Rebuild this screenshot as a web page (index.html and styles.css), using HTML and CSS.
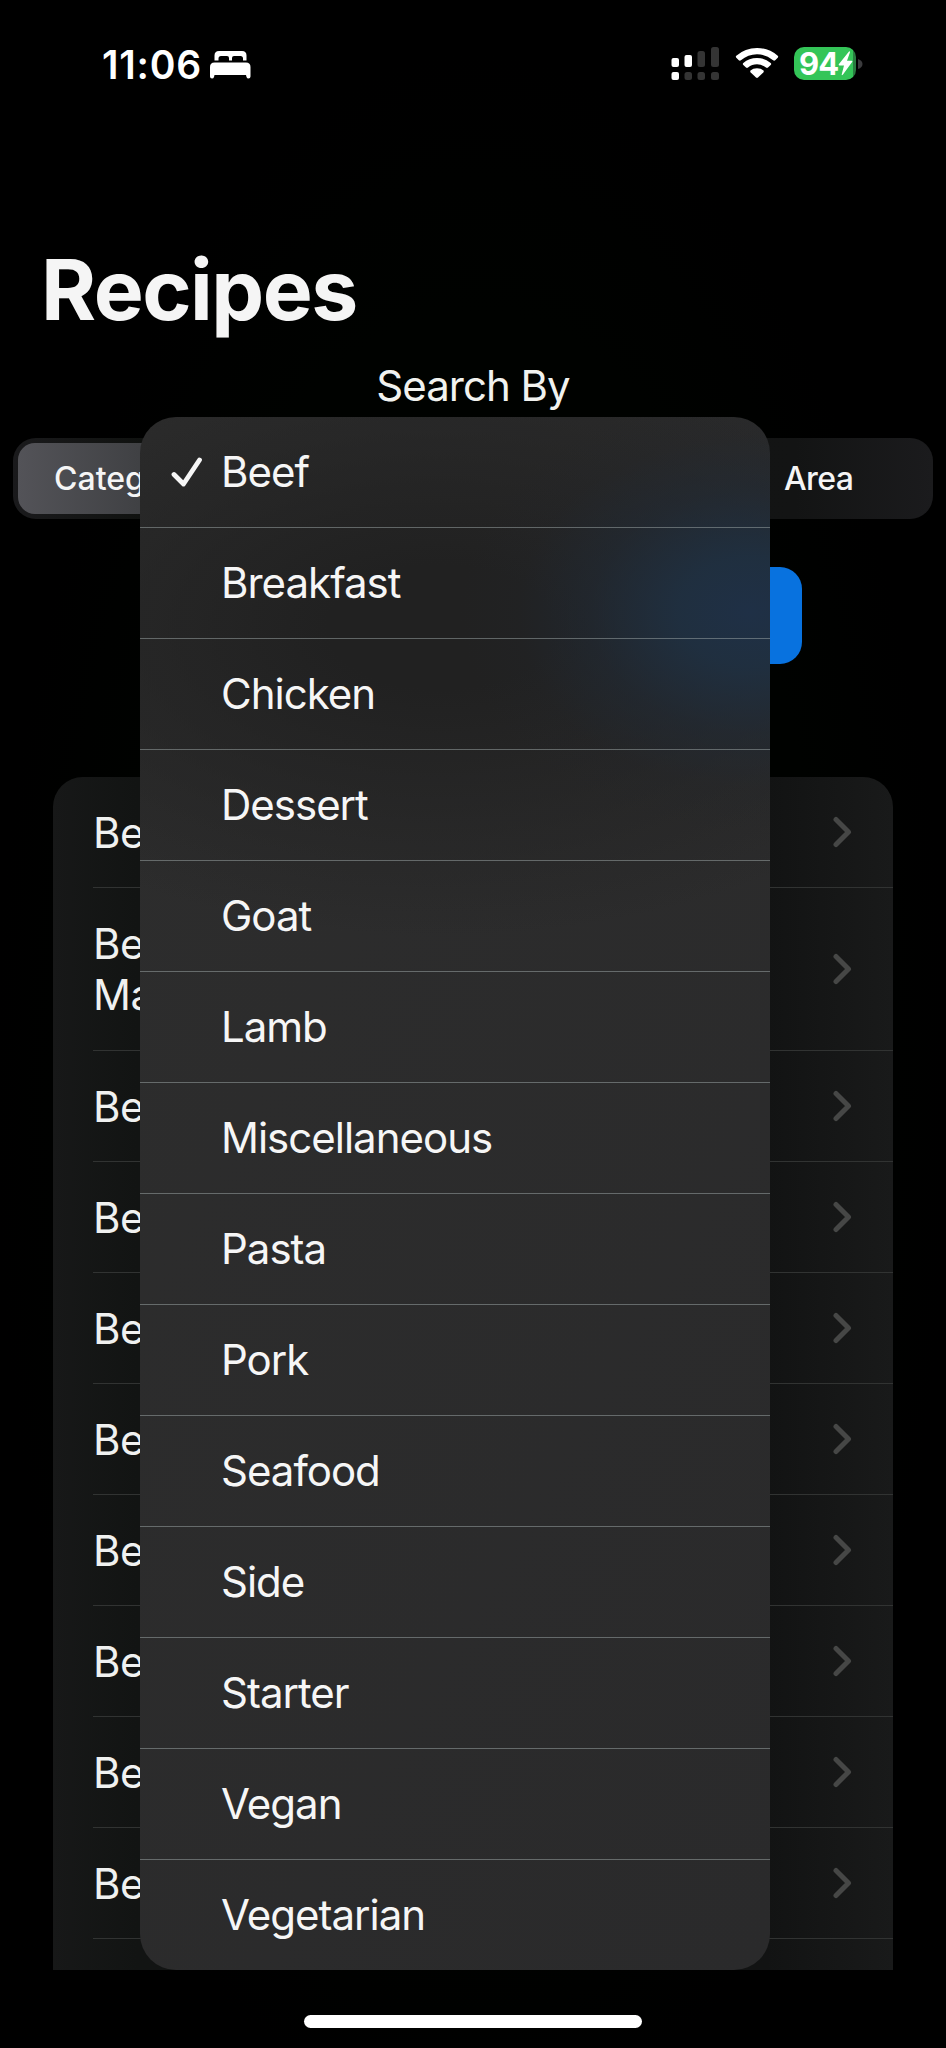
FILE: index.html
```
<!DOCTYPE html>
<html lang="en">
<head>
<meta charset="utf-8">
<title>Recipes</title>
<link rel="stylesheet" href="styles.css">
</head>
<body>
<svg class="defs" width="0" height="0"><symbol id="chev" viewBox="0 0 20 32"><path d="M3 3.500 L15.500 16 L3 28.500" fill="none" stroke="currentColor" stroke-width="5" stroke-linecap="round" stroke-linejoin="round"/></symbol></svg>
<div class="phone">
  <header class="status">
    <span class="time">11:06</span>
    <svg class="bed" width="42" height="30" viewBox="0 0 42 30"><path fill="#fff" d="M4.500 10.500V5.500Q4.500 1 9 1H32Q36.500 1 36.500 5.500V10.500H33V8.500Q33 6 30.500 6H24Q22 6 22 8V10.500H19V8Q19 6 17 6H11Q8.500 6 8.500 8.500V10.500Z"/><path fill="#fff" d="M0 17Q0 12.500 4.500 12.500H36Q40.500 12.500 40.500 17V26.500Q40.500 28.500 38.500 28.500Q37 28.500 36.500 27L36 25H4.500L4 27Q3.500 28.500 2 28.500Q0 28.500 0 26.500Z"/></svg>
    <svg class="signal" width="50" height="36" viewBox="0 0 50 36"><g fill="#fff"><rect x="0.500" y="11" width="7.500" height="9" rx="2"/><rect x="13.500" y="8" width="7.500" height="12" rx="2"/><rect x="0.500" y="25" width="7.500" height="8" rx="2"/></g><g fill="#343434"><rect x="26.500" y="4" width="7.500" height="16" rx="2.500"/><rect x="40" y="0" width="8" height="20" rx="2.500"/><rect x="13.500" y="25" width="7.500" height="8" rx="2.500"/><rect x="26.500" y="25" width="7.500" height="8" rx="2.500"/><rect x="40" y="25" width="8" height="8" rx="2.500"/></g></svg>
    <svg class="wifi" width="44" height="32" viewBox="0 0 44 32"><g fill="#fff"><path d="M1.300 8.800Q0.300 9.800 1.300 10.800L3.800 13.300Q4.800 14.200 5.900 13.300Q13 7.300 22 7.300T38.100 13.300Q39.200 14.200 40.200 13.300L42.700 10.800Q43.700 9.800 42.700 8.800Q34 1 22 1T1.300 8.800Z"/><path d="M8.300 16Q7.300 17 8.300 18L11 20.600Q12 21.400 13 20.600Q17 17.300 22 17.300T31 20.600Q32 21.400 33 20.600L35.700 18Q36.700 17 35.700 16Q30 11 22 11T8.300 16Z"/><path d="M15.500 23.500Q14.800 24.500 15.700 25.400L21 30.600Q22 31.500 23 30.600L28.300 25.400Q29.200 24.500 28.500 23.500Q26 21.200 22 21.200T15.500 23.500Z"/></g></svg>
    <div class="battery"><span class="pct">94</span><svg class="bolt" width="15" height="25" viewBox="0 0 15 25"><path fill="#fff" d="M11 0.500L0.800 13.200Q0.200 14.300 1.500 14.400H6L3.700 23.500Q3.700 24.800 4.800 23.800L14.300 10.800Q14.800 9.800 13.600 9.700H9L12 1.200Q12 0 11 0.500Z"/></svg></div>
    <svg class="nub" width="5" height="12" viewBox="0 0 5 12"><path fill="#3b3b3d" d="M0 1Q4.500 2.500 4.500 6T0 11Z"/></svg>
  </header>
  <h1 class="title">Recipes</h1>
  <p class="search">Search By</p>
  <div class="segments"><div class="segment selected">Categ</div><div class="segment area">Area</div></div>
  <div class="picker"></div>
  <ul class="list">
    <li><span>Be</span><svg><use href="#chev"/></svg></li>
    <li class="tall"><span>Be<br>Ma</span><svg><use href="#chev"/></svg></li>
    <li><span>Be</span><svg><use href="#chev"/></svg></li>
    <li><span>Be</span><svg><use href="#chev"/></svg></li>
    <li><span>Be</span><svg><use href="#chev"/></svg></li>
    <li><span>Be</span><svg><use href="#chev"/></svg></li>
    <li><span>Be</span><svg><use href="#chev"/></svg></li>
    <li><span>Be</span><svg><use href="#chev"/></svg></li>
    <li><span>Be</span><svg><use href="#chev"/></svg></li>
    <li><span>Be</span><svg><use href="#chev"/></svg></li>
  </ul>
  <div class="home"></div>
  <ul class="menu">
    <li><svg class="check" width="32" height="32" viewBox="0 0 32 32"><path d="M3 17.500L12.500 27L28.500 3" fill="none" stroke="#f6f6f6" stroke-width="4.800" stroke-linecap="round" stroke-linejoin="round"/></svg><span>Beef</span></li>
    <li><span>Breakfast</span></li>
    <li><span>Chicken</span></li>
    <li><span>Dessert</span></li>
    <li><span>Goat</span></li>
    <li><span>Lamb</span></li>
    <li><span>Miscellaneous</span></li>
    <li><span>Pasta</span></li>
    <li><span>Pork</span></li>
    <li><span>Seafood</span></li>
    <li><span>Side</span></li>
    <li><span>Starter</span></li>
    <li><span>Vegan</span></li>
    <li><span>Vegetarian</span></li>
  </ul>
</div>
</body>
</html>
```
FILE: styles.css
```
* { box-sizing: border-box; }
body { margin: 0; background: #000; font-family: Inter, "Liberation Sans", sans-serif; color: #f5f5f5; }
ul { list-style: none; margin: 0; padding: 0; }
.defs { display: block; height: 0; }
.phone { position: relative; width: 946px; height: 2048px; overflow: hidden; display: flex; flex-direction: column; background: radial-gradient(ellipse 480px 1050px at 473px 1100px, #000200 75%, #000 100%); }
.status { height: 130px; flex: none; display: flex; align-items: flex-start; padding: 47px 0 0 102px; color: #fff; }
.time { width: 98px; font-size: 39px; line-height: 36px; font-weight: 600; letter-spacing: 0.800px; white-space: nowrap; }
.bed { margin: 3px 0 0 10px; }
.signal { margin-left: 419px; }
.wifi { margin: 0 0 0 14px; }
.battery { margin-left: 15px; width: 62px; height: 33px; border-radius: 10px; background: linear-gradient(90deg, #34c558 59px, #287c3f 59px); display: flex; align-items: center; padding-left: 5px; }
.pct { width: 39px; font-size: 31px; line-height: 33px; font-weight: 700; letter-spacing: -0.800px; }
.nub { margin: 11px 0 0 2px; }
.title { margin: 110px 0 0 41px; font-size: 84px; line-height: 100px; font-weight: 700; letter-spacing: -1.500px; }
.search { margin: 21px 0 0; font-size: 42px; line-height: 50px; letter-spacing: -1px; text-align: center; color: #f1f2ef; }
.segments { margin: 27px 13px 0; height: 81px; flex: none; border-radius: 23px; background: linear-gradient(90deg, #1a1a1c, #101210 14%, #131414 85%, #1b1b1d); padding: 5px; display: flex; font-size: 32px; font-weight: 500; line-height: 71px; }
.segment { width: 303px; }
.selected { border-radius: 17px; background: linear-gradient(90deg, #535358, #404144 40%); padding-left: 36px; }
.area { margin-left: auto; padding-left: 159px; letter-spacing: -0.600px; }
.picker { margin: 48px 144px 0; height: 97px; flex: none; border-radius: 22px; background: #0872df; }
.list { margin: 113px 53px 0; height: 1193px; flex: none; border-radius: 30px 30px 0 0; overflow: hidden; background: linear-gradient(90deg, #171818, #121413 10%, #121313 85%, #191a1a); }
.list li { position: relative; height: 111px; padding: 0 40px 1px; display: flex; align-items: center; justify-content: space-between; font-size: 42px; line-height: 51px; letter-spacing: -0.500px; color: #f0f1f0; }
.list li::after, .menu li:not(:last-child)::after { content: ""; position: absolute; right: 0; bottom: 0; height: 1px; }
.list li::after { left: 40px; background: #313332; }
.list .tall { height: 163px; }
.list svg { width: 20px; height: 32px; color: #464746; }
.home { margin: 45px auto 0; width: 338px; height: 13px; flex: none; border-radius: 7px; background: #fff; }
.menu { position: absolute; left: 140px; top: 417px; width: 630px; height: 1553px; border-radius: 36px; overflow: hidden; background: radial-gradient(ellipse 290px 220px at 610px 195px, #1f3046 0, rgba(31,48,66,.9) 25%, rgba(32,43,56,.5) 55%, rgba(34,38,44,.18) 80%, rgba(34,36,40,0) 100%), radial-gradient(ellipse 560px 310px at 300px 210px, #212121 20%, rgba(33,33,33,0) 100%), linear-gradient(120deg, #2d2d2d, #2a2a2b); }
.menu li { position: relative; height: 111px; padding-left: 81px; font-size: 42px; line-height: 110px; letter-spacing: -1px; color: #f6f6f6; }
.menu li::after { left: 0; background: rgba(160,170,170,.5); }
.check { position: absolute; left: 31px; top: 40px; }
```
